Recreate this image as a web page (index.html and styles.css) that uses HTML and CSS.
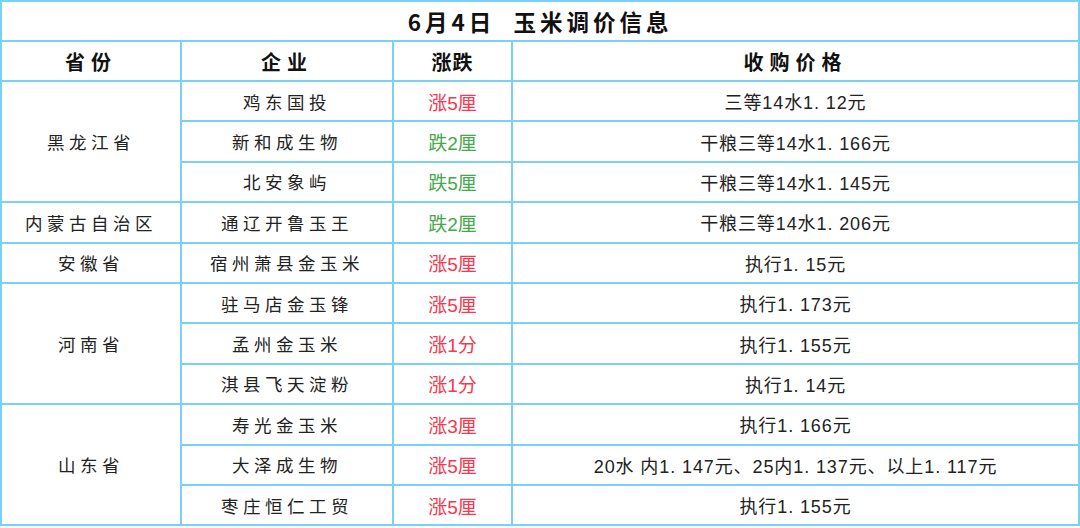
FILE: index.html
```html
<!DOCTYPE html>
<html lang="zh-CN">
<head>
<meta charset="utf-8">
<title>6月4日 玉米调价信息</title>
<link rel="stylesheet" href="styles.css">
</head>
<body>
<table class="price-table">
  <colgroup>
    <col class="c-prov">
    <col class="c-comp">
    <col class="c-chg">
    <col class="c-price">
  </colgroup>
  <thead>
    <tr class="title-row"><th colspan="4" class="title">6月4日&nbsp;&nbsp;玉米调价信息</th></tr>
    <tr class="head-row">
      <th class="h-wide">省份</th>
      <th class="h-wide">企业</th>
      <th>涨跌</th>
      <th class="h-wide">收购价格</th>
    </tr>
  </thead>
  <tbody>
    <tr>
      <td rowspan="3" class="name">黑龙江省</td>
      <td class="name">鸡东国投</td>
      <td class="up">涨5厘</td>
      <td class="price">三等14水1. 12元</td>
    </tr>
    <tr>
      <td class="name">新和成生物</td>
      <td class="down">跌2厘</td>
      <td class="price">干粮三等14水1. 166元</td>
    </tr>
    <tr>
      <td class="name">北安象屿</td>
      <td class="down">跌5厘</td>
      <td class="price">干粮三等14水1. 145元</td>
    </tr>
    <tr>
      <td class="name">内蒙古自治区</td>
      <td class="name">通辽开鲁玉王</td>
      <td class="down">跌2厘</td>
      <td class="price">干粮三等14水1. 206元</td>
    </tr>
    <tr>
      <td class="name">安徽省</td>
      <td class="name">宿州萧县金玉米</td>
      <td class="up">涨5厘</td>
      <td class="price">执行1. 15元</td>
    </tr>
    <tr>
      <td rowspan="3" class="name">河南省</td>
      <td class="name">驻马店金玉锋</td>
      <td class="up">涨5厘</td>
      <td class="price">执行1. 173元</td>
    </tr>
    <tr>
      <td class="name">孟州金玉米</td>
      <td class="up">涨1分</td>
      <td class="price">执行1. 155元</td>
    </tr>
    <tr>
      <td class="name">淇县飞天淀粉</td>
      <td class="up">涨1分</td>
      <td class="price">执行1. 14元</td>
    </tr>
    <tr>
      <td rowspan="3" class="name">山东省</td>
      <td class="name">寿光金玉米</td>
      <td class="up">涨3厘</td>
      <td class="price">执行1. 166元</td>
    </tr>
    <tr>
      <td class="name">大泽成生物</td>
      <td class="up">涨5厘</td>
      <td class="price">20水 内1. 147元、25内1. 137元、以上1. 117元</td>
    </tr>
    <tr>
      <td class="name">枣庄恒仁工贸</td>
      <td class="up">涨5厘</td>
      <td class="price">执行1. 155元</td>
    </tr>
  </tbody>
</table>
</body>
</html>
```

FILE: styles.css
```css
html, body {
  margin: 0;
  padding: 0;
  background: #ffffff;
}

body {
  width: 1080px;
  height: 528px;
  overflow: hidden;
  font-family: "Liberation Sans", "Noto Sans CJK SC", sans-serif;
  color: #222222;
}

.price-table {
  width: 1078px;
  border-collapse: collapse;
  table-layout: fixed;
  border: 2px solid #12b2ef;
}

.c-prov { width: 180px; }
.c-comp { width: 212px; }
.c-chg { width: 119px; }
.c-price { width: 567px; }

.price-table th,
.price-table td {
  border: 2px solid #79d2f6;
  padding: 0;
  text-align: center;
  vertical-align: middle;
}

.title-row { height: 40px; }
.title {
  font-family: "Noto Sans CJK SC", sans-serif;
  font-size: 22.5px;
  font-weight: 700;
  letter-spacing: 4px;
  color: #111111;
}

.head-row { height: 40px; }
.head-row th {
  font-family: "Noto Sans CJK SC", sans-serif;
  font-size: 20px;
  font-weight: 700;
  color: #111111;
  letter-spacing: 1px;
}
.head-row .h-wide { letter-spacing: 6px; }

tbody tr { height: 40.4px; }

.name {
  font-family: "Noto Sans CJK SC", sans-serif;
  font-size: 17.5px;
  letter-spacing: 4.5px;
  color: #222222;
}

.up, .down {
  font-family: "Liberation Sans", "Noto Sans CJK SC", sans-serif;
  font-size: 19px;
}
.up { color: #f7384f; }
.down { color: #45a84a; }

.price {
  font-family: "Liberation Sans", "Noto Sans CJK SC", sans-serif;
  font-size: 18px;
  letter-spacing: 0.9px;
  color: #222222;
}
```
